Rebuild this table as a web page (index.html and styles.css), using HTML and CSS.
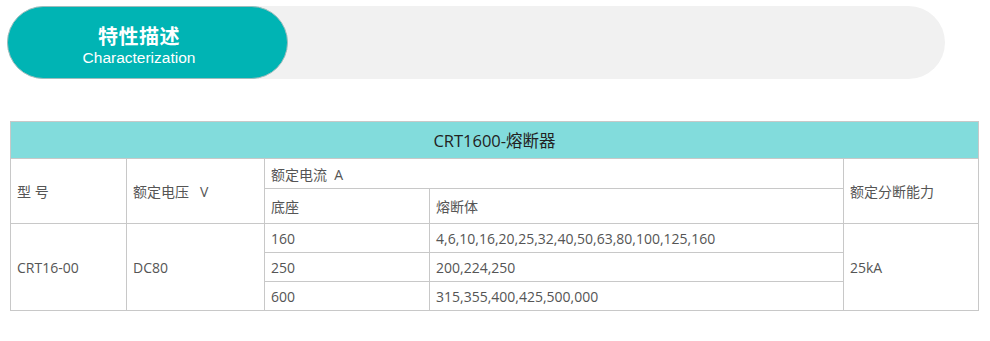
FILE: index.html
```html
<!DOCTYPE html>
<html lang="zh-CN">
<head>
<meta charset="utf-8">
<title>特性描述</title>
<link rel="stylesheet" href="styles.css">
</head>
<body>
<div class="page">
  <div class="banner">
    <div class="pill">
      <div class="pill-cn">特性描述</div>
      <div class="pill-en">Characterization</div>
    </div>
  </div>
  <table class="spec">
    <colgroup>
      <col class="c1"><col class="c2"><col class="c3"><col class="c4"><col class="c5">
    </colgroup>
    <tr class="r-head"><th colspan="5">CRT1600-熔断器</th></tr>
    <tr class="r-sub1">
      <td rowspan="2">型 号</td>
      <td rowspan="2">额定电压&nbsp;&nbsp;&nbsp;V</td>
      <td colspan="2">额定电流&nbsp;&nbsp;A</td>
      <td rowspan="2">额定分断能力</td>
    </tr>
    <tr class="r-sub2"><td>底座</td><td>熔断体</td></tr>
    <tr class="r-data">
      <td rowspan="3">CRT16-00</td>
      <td rowspan="3">DC80</td>
      <td>160</td>
      <td>4,6,10,16,20,25,32,40,50,63,80,100,125,160</td>
      <td rowspan="3">25kA</td>
    </tr>
    <tr class="r-data"><td>250</td><td>200,224,250</td></tr>
    <tr class="r-data"><td>600</td><td>315,355,400,425,500,000</td></tr>
  </table>
</div>
</body>
</html>
```

FILE: styles.css
```css
html, body {
  margin: 0;
  padding: 0;
  background: #ffffff;
}

.page {
  padding: 6px 0 0 7px;
}

.banner {
  width: 938px;
  height: 73px;
  background: #f1f1f1;
  border-radius: 37px;
}

.pill {
  width: 281px;
  height: 73px;
  box-sizing: border-box;
  background: #00b4b4;
  border: 1px solid #9fbcbc;
  border-radius: 37px;
  display: flex;
  flex-direction: column;
  align-items: center;
  justify-content: flex-start;
  color: #ffffff;
  padding: 19px 17px 0 0;
}

.pill-cn {
  font-family: "Noto Sans CJK SC", sans-serif;
  font-weight: 700;
  font-size: 20px;
  line-height: 20px;
  letter-spacing: 0.5px;
}

.pill-en {
  font-family: "Liberation Sans", Arial, sans-serif;
  font-size: 15.5px;
  line-height: 18px;
  margin-top: 3px;
}

.spec {
  margin: 42px 0 0 3px;
  border-collapse: collapse;
  table-layout: fixed;
  width: 968px;
  font-family: "Open Sans", "Noto Sans CJK SC", sans-serif;
  font-size: 14px;
  color: #555555;
}

.c1 { width: 116px; }
.c2 { width: 138px; }
.c3 { width: 165px; }
.c4 { width: 414px; }
.c5 { width: 135px; }

.spec th,
.spec td {
  border: 1px solid #c8c8c8;
  padding: 0 0 0 6px;
  text-align: left;
  vertical-align: middle;
  font-weight: 400;
  white-space: nowrap;
}

.spec th {
  background: #82dcdc;
  text-align: center;
  color: #222222;
  font-size: 16.5px;
  padding: 0;
}

.r-head { height: 37px; }
.r-sub1 { height: 30px; }
.r-sub2 { height: 35px; }
.r-data { height: 29px; }
```
